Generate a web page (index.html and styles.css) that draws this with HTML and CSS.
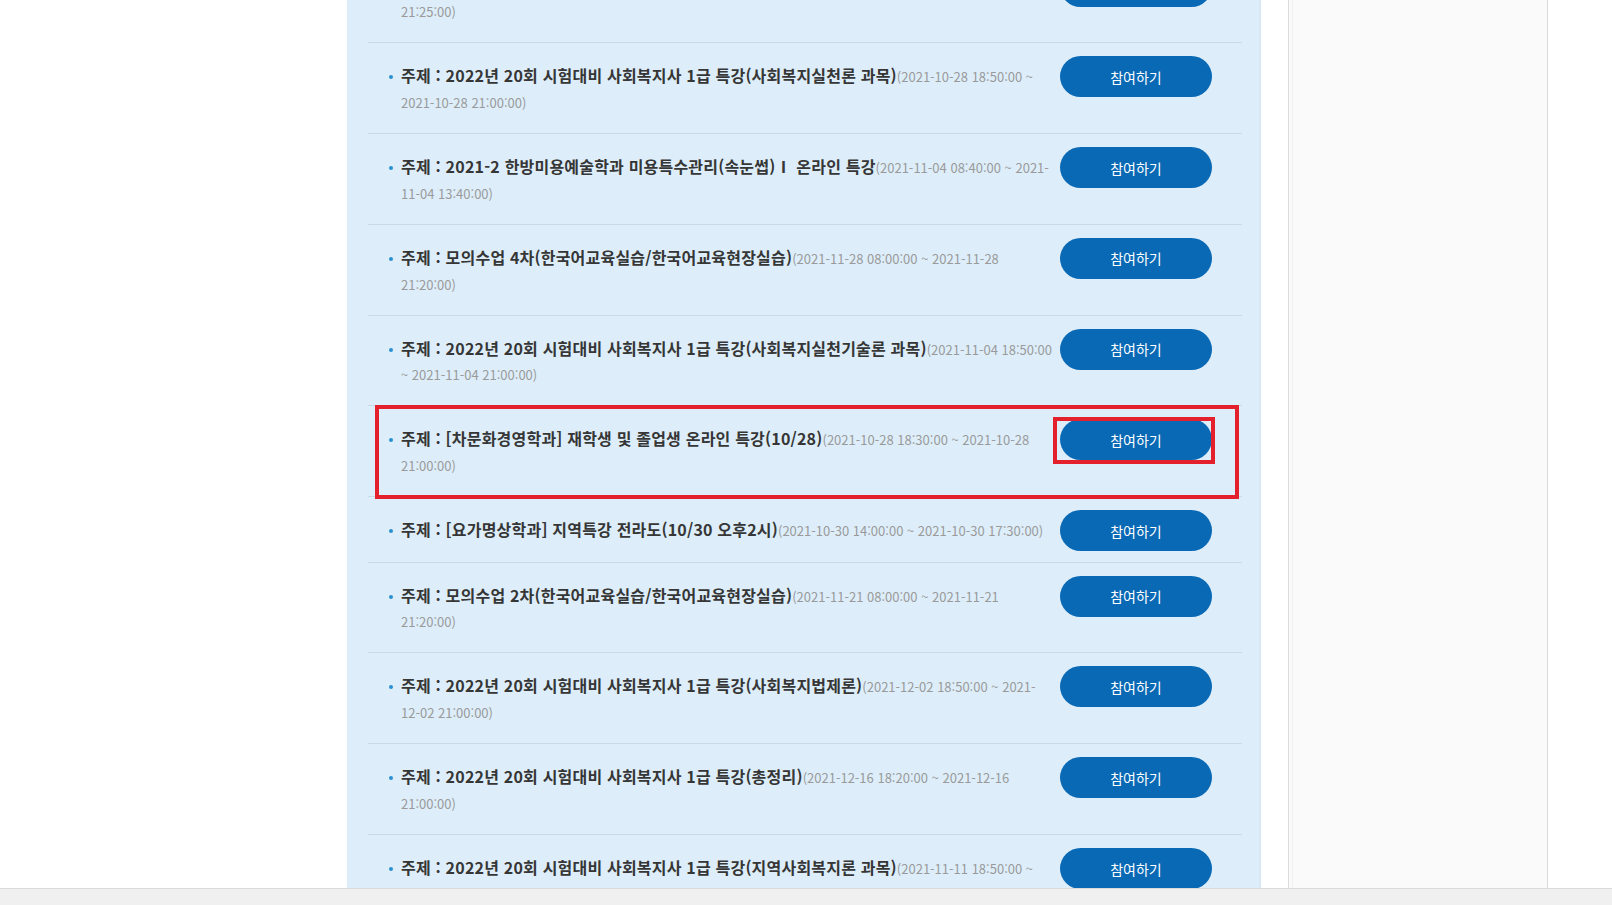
FILE: index.html
```html
<!DOCTYPE html>
<html lang="ko">
<head>
<meta charset="utf-8">
<title>특강 목록</title>
<link rel="stylesheet" href="styles.css">
</head>
<body>
<div class="page">
  <main class="board">
    <ul class="lecture-list">
      <li class="lecture">
        <span class="dot"></span>
        <p class="lecture-text"><span class="line"><strong class="title">주제 : 모의수업 3차(한국어교육실습/한국어교육현장실습)</strong><span class="date">(2021-11-14 08:00:00 ~ 2021-11-14</span></span><span class="line"><span class="date">21:25:00)</span></span></p>
        <div class="action"><button class="join" type="button">참여하기</button></div>
      </li>
      <li class="lecture">
        <span class="dot"></span>
        <p class="lecture-text"><span class="line"><strong class="title">주제 : 2022년 20회 시험대비 사회복지사 1급 특강(사회복지실천론 과목)</strong><span class="date">(2021-10-28 18:50:00 ~</span></span><span class="line"><span class="date">2021-10-28 21:00:00)</span></span></p>
        <div class="action"><button class="join" type="button">참여하기</button></div>
      </li>
      <li class="lecture">
        <span class="dot"></span>
        <p class="lecture-text"><span class="line"><strong class="title">주제 : 2021-2 한방미용예술학과 미용특수관리(속눈썹)Ⅰ 온라인 특강</strong><span class="date">(2021-11-04 08:40:00 ~ 2021-</span></span><span class="line"><span class="date">11-04 13:40:00)</span></span></p>
        <div class="action"><button class="join" type="button">참여하기</button></div>
      </li>
      <li class="lecture">
        <span class="dot"></span>
        <p class="lecture-text"><span class="line"><strong class="title">주제 : 모의수업 4차(한국어교육실습/한국어교육현장실습)</strong><span class="date">(2021-11-28 08:00:00 ~ 2021-11-28</span></span><span class="line"><span class="date">21:20:00)</span></span></p>
        <div class="action"><button class="join" type="button">참여하기</button></div>
      </li>
      <li class="lecture">
        <span class="dot"></span>
        <p class="lecture-text"><span class="line"><strong class="title">주제 : 2022년 20회 시험대비 사회복지사 1급 특강(사회복지실천기술론 과목)</strong><span class="date">(2021-11-04 18:50:00</span></span><span class="line"><span class="date">~ 2021-11-04 21:00:00)</span></span></p>
        <div class="action"><button class="join" type="button">참여하기</button></div>
      </li>
      <li class="lecture is-marked">
        <span class="dot"></span>
        <p class="lecture-text"><span class="line"><strong class="title">주제 : [차문화경영학과] 재학생 및 졸업생 온라인 특강(10/28)</strong><span class="date">(2021-10-28 18:30:00 ~ 2021-10-28</span></span><span class="line"><span class="date">21:00:00)</span></span></p>
        <div class="action"><button class="join" type="button">참여하기</button><span class="mark mark-btn"></span></div>
        <span class="mark mark-row"></span>
      </li>
      <li class="lecture">
        <span class="dot"></span>
        <p class="lecture-text"><span class="line"><strong class="title">주제 : [요가명상학과] 지역특강 전라도(10/30 오후2시)</strong><span class="date">(2021-10-30 14:00:00 ~ 2021-10-30 17:30:00)</span></span></p>
        <div class="action"><button class="join" type="button">참여하기</button></div>
      </li>
      <li class="lecture">
        <span class="dot"></span>
        <p class="lecture-text"><span class="line"><strong class="title">주제 : 모의수업 2차(한국어교육실습/한국어교육현장실습)</strong><span class="date">(2021-11-21 08:00:00 ~ 2021-11-21</span></span><span class="line"><span class="date">21:20:00)</span></span></p>
        <div class="action"><button class="join" type="button">참여하기</button></div>
      </li>
      <li class="lecture">
        <span class="dot"></span>
        <p class="lecture-text"><span class="line"><strong class="title">주제 : 2022년 20회 시험대비 사회복지사 1급 특강(사회복지법제론)</strong><span class="date">(2021-12-02 18:50:00 ~ 2021-</span></span><span class="line"><span class="date">12-02 21:00:00)</span></span></p>
        <div class="action"><button class="join" type="button">참여하기</button></div>
      </li>
      <li class="lecture">
        <span class="dot"></span>
        <p class="lecture-text"><span class="line"><strong class="title">주제 : 2022년 20회 시험대비 사회복지사 1급 특강(총정리)</strong><span class="date">(2021-12-16 18:20:00 ~ 2021-12-16</span></span><span class="line"><span class="date">21:00:00)</span></span></p>
        <div class="action"><button class="join" type="button">참여하기</button></div>
      </li>
      <li class="lecture">
        <span class="dot"></span>
        <p class="lecture-text"><span class="line"><strong class="title">주제 : 2022년 20회 시험대비 사회복지사 1급 특강(지역사회복지론 과목)</strong><span class="date">(2021-11-11 18:50:00 ~</span></span><span class="line"><span class="date">2021-11-11 21:00:00)</span></span></p>
        <div class="action"><button class="join" type="button">참여하기</button></div>
      </li>
    </ul>
  </main>
  <aside class="side"><div class="side-inner"></div></aside>
</div>
<div class="hscroll"></div>
</body>
</html>
```
FILE: styles.css
```css
html, body {
  margin: 0;
  padding: 0;
  overflow: hidden;
  background: #ffffff;
  height: 905px;
}

body {
  font-family: "Noto Sans CJK KR", "Noto Sans", sans-serif;
  color: #333;
}

.page {
  display: flex;
  align-items: stretch;
  padding-left: 347px;
}

.board {
  width: 914px;
  flex: none;
  background: #ddeefa;
  margin-top: -47.5px;
  padding-bottom: 40px;
  box-shadow: inset -2px 0 0 #d7e8f4;
}

.lecture-list {
  list-style: none;
  margin: 0 19px 0 21px;
  padding: 0;
}

.lecture {
  display: flex;
  align-items: flex-start;
  border-bottom: 1px solid #c9d9e7;
}

.is-marked {
  position: relative;
}

.dot {
  flex: none;
  width: 4px;
  height: 4px;
  border-radius: 50%;
  background: #2b8fd1;
  margin: 32px 8px 0 21px;
}

.lecture-text {
  flex: 1;
  min-width: 0;
  margin: 0;
  padding: 20px 0 18.2px;
  font-size: 16px;
  line-height: 25.8px;
}

.line {
  display: block;
  white-space: nowrap;
  height: 25.8px;
}

.title {
  font-size: 16px;
  line-height: 1;
  font-weight: 700;
  color: #363636;
  letter-spacing: 0.2px;
}

.date {
  font-size: 13px;
  line-height: 1;
  color: #9a9a9a;
}

.action {
  position: relative;
  flex: none;
  margin: 13px 30px 10.5px 10px;
}

.join {
  display: block;
  width: 152px;
  height: 41px;
  border: 0;
  border-radius: 21px;
  background: #0a69b5;
  color: #fff;
  font-family: "Noto Sans CJK KR", "Noto Sans", sans-serif;
  font-size: 14px;
  padding: 0;
  cursor: pointer;
}

.mark {
  position: absolute;
  border: 4px solid #e3202b;
  pointer-events: none;
}

.mark-row {
  left: 7px;
  right: 3px;
  top: -1px;
  bottom: -3px;
}

.mark-btn {
  left: -7px;
  right: -3px;
  top: -2px;
  bottom: -4px;
}

.side {
  flex: none;
  width: 258px;
  margin-left: 27px;
  background: #fafafa;
  border-left: 1px solid #dadada;
  border-right: 1px solid #dadada;
}

.side-inner {
  height: 100%;
  margin-left: 3px;
  border-left: 1px solid #efefef;
}

.hscroll {
  position: fixed;
  left: 0;
  right: 0;
  bottom: 0;
  height: 16px;
  background: #f0f0f0;
  border-top: 1px solid #dadada;
}
```
